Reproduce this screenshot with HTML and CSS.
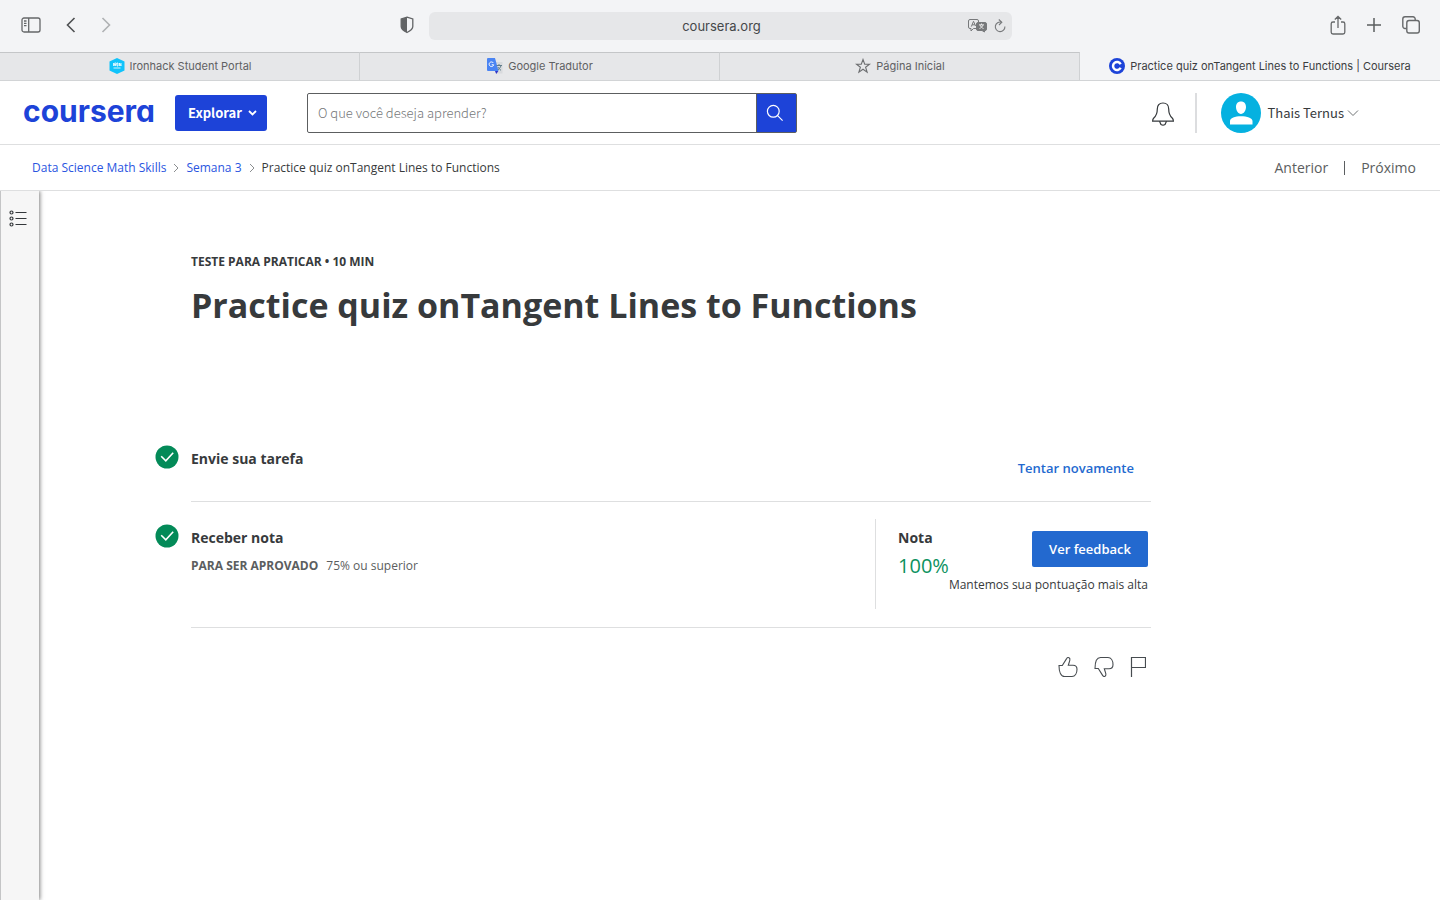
FILE: index.html
```html
<!DOCTYPE html>
<html lang="pt-BR">
<head>
<meta charset="utf-8">
<title>Practice quiz onTangent Lines to Functions | Coursera</title>
<link rel="stylesheet" href="styles.css">
</head>
<body>
<div class="browser">
  <div class="toolbar">
    <div class="toolbar-side">
      <button class="icon-btn" aria-label="Barra lateral"><svg width="20" height="16" viewBox="0 0 20 16" fill="none" stroke="#656769" stroke-width="1.3"><rect x="1" y="1" width="18" height="14" rx="2"/><path d="M7.7 1v14M3 4h2.5M3 6.3h2.5M3 8.6h2.5"/></svg></button>
      <button class="icon-btn nav-back" aria-label="Voltar"><svg width="10" height="16" viewBox="0 0 10 16" fill="none" stroke="#4f5153" stroke-width="1.6"><path d="M8.5 1 1.5 8l7 7"/></svg></button>
      <button class="icon-btn nav-next" aria-label="Avançar"><svg width="10" height="16" viewBox="0 0 10 16" fill="none" stroke="#afb1b3" stroke-width="1.6"><path d="m1.5 1 7 7-7 7"/></svg></button>
      <button class="icon-btn shield" aria-label="Privacidade"><svg width="14" height="18" viewBox="0 0 14 18"><path d="M7 1.2 12.8 3v7.5c0 2.600-3.200 4.700-5.800 6-2.600-1.300-5.800-3.400-5.800-6V3z" fill="none" stroke="#626466" stroke-width="1.300"/><path d="M7 1.200v15.300c-2.600-1.300-5.800-3.400-5.800-6V3z" fill="#626466"/></svg></button>
    </div>
    <div class="address">
      <span class="address-text">coursera.org</span>
      <button class="icon-btn" aria-label="Traduzir"><svg width="19" height="14" viewBox="0 0 19 14" fill="none" stroke="#77797b"><path d="M8 9.500H5.500L3 12V9.500H2a1.500 1.500 0 0 1-1.500-1.500V2A1.500 1.500 0 0 1 2 .500h7A1.500 1.500 0 0 1 10.500 2v1"/><path d="m3.300 7.600 2.200-5.300L7.600 7M4 5.800h3"/><path d="M10 3.500h7A1.500 1.500 0 0 1 18.500 5v5a1.500 1.500 0 0 1-1.500 1.500h-.500V13L14 11.500h-4A1.500 1.500 0 0 1 8.500 10V5A1.500 1.500 0 0 1 10 3.500z" fill="#77797b"/><path d="M11 5.800h5M13.500 4.500v1.300M12 6c.5 1.500 2 3 3.500 3.500M15 6c-.5 1.500-2 3-3.500 3.500" stroke="#fff" stroke-width=".8"/></svg></button>
      <button class="icon-btn" aria-label="Recarregar"><svg width="12" height="14" viewBox="0 0 12 14" fill="none" stroke="#77797b" stroke-width="1.100"><path d="M7.500 3.200A4.800 4.800 0 1 0 10.900 7.500M4.800.5l3 2.700L5 6"/></svg></button>
    </div>
    <div class="toolbar-side toolbar-end">
      <button class="icon-btn" aria-label="Compartilhar"><svg width="16" height="20" viewBox="0 0 16 20" fill="none" stroke="#67696b" stroke-width="1.300"><path d="M5 7H3a1.800 1.800 0 0 0-1.800 1.800v8.400A1.800 1.800 0 0 0 3 19h10a1.800 1.800 0 0 0 1.800-1.800V8.800A1.800 1.800 0 0 0 13 7h-2M8 13V1.500M4.800 4.500 8 1.500l3.200 3"/></svg></button>
      <button class="icon-btn" aria-label="Nova aba"><svg width="14" height="14" viewBox="0 0 14 14" stroke="#5b5d5f" stroke-width="1.500"><path d="M7 0v14M0 7h14"/></svg></button>
      <button class="icon-btn" aria-label="Visão geral das abas"><svg width="18" height="18" viewBox="0 0 18 18" fill="none" stroke="#67696b" stroke-width="1.400"><rect x="4.800" y="4.500" width="12.500" height="12.500" rx="2.200"/><path d="M4.500 12.500H3A2.200 2.200 0 0 1 .8 10.300V3A2.200 2.200 0 0 1 3 .8h8A2.200 2.200 0 0 1 13.200 3v1.300"/></svg></button>
    </div>
  </div>
  <nav class="tabs" aria-label="Abas">
    <a class="tab" href="#"><svg width="16" height="16" viewBox="0 0 16 16"><path d="m8 0 7.500 3.500v9L8 16 .5 12.500v-9z" fill="#0fc3fb"/><path d="M4.500 5v3m1.200 0V5h1.500v1.500H5.700L7 8m1-3h1v3H8zm2.500 3V5l1.500 3V5M4.500 10h7" fill="none" stroke="#fff" stroke-width=".8"/></svg>Ironhack Student Portal</a>
    <a class="tab" href="#"><svg width="16" height="16" viewBox="0 0 16 16"><path d="M8 4h7.500v11.500H9z" fill="#d8dadd"/><path d="M1 0h7l3.500 13H1a1 1 0 0 1-1-1V1a1 1 0 0 1 1-1z" fill="#4a84f3"/><path d="M8 13h3.400L9.200 16z" fill="#3034c7"/><path d="M6.400 5A2.300 2.300 0 1 0 6.700 6.800H4.700" fill="none" stroke="#fff"/><path d="M9.500 7.500H15M12 6v1.500M14 7.500c-.5 2-2 3.500-3 4.500M11 9c.5 1.200 2 2.500 3 3.500" fill="none" stroke="#607d8b"/></svg>Google Tradutor</a>
    <a class="tab" href="#"><svg width="16" height="16" viewBox="0 0 16 16" fill="none" stroke="#6c6e70" stroke-width="1.100"><path d="m8 1.500 1.700 4.700h4.800l-3.900 3 1.500 4.900L8 11.200l-4.100 2.900 1.500-4.900-3.900-3h4.800z"/></svg>Página Inicial</a>
    <a class="tab tab-active" href="#"><svg width="16" height="16" viewBox="0 0 16 16"><circle cx="8" cy="8" r="8" fill="#1d43d8"/><path d="M11.600 6.200a4 4 0 1 0 0 3.600" fill="none" stroke="#fff" stroke-width="2.500"/></svg>Practice quiz onTangent Lines to Functions | Coursera</a>
  </nav>
</div>

<header class="header">
  <a class="logo" href="#">coursera</a>
  <button class="explore">Explorar <svg width="9" height="6" viewBox="0 0 9 6" fill="none" stroke="#fff" stroke-width="1.800"><path d="m1 1 3.500 3.500L8 1"/></svg></button>
  <form class="search">
    <input type="text" aria-label="Pesquisar" placeholder="O que você deseja aprender?">
    <button type="button" aria-label="Buscar"><svg width="18" height="18" viewBox="0 0 18 18" fill="none" stroke="#fff" stroke-width="1.200"><circle cx="7.300" cy="7.300" r="5.900"/><path d="m11.600 11.600 5 5"/></svg></button>
  </form>
  <div class="account">
    <button class="icon-btn" aria-label="Notificações"><svg width="24" height="26" viewBox="0 0 24 26" fill="none" stroke="#35393c" stroke-width="1.200"><path d="M12 3c-3.700 0-5.700 2.500-5.700 6 0 5-1 6.700-3.500 9-.8.800-1.200 1.500-1.200 3.200h20.800c0-1.700-.4-2.400-1.200-3.200-2.500-2.300-3.500-4-3.500-9 0-3.500-2-6-5.700-6z"/><path d="M8.500 21.200 10 24.500c1.200.8 2.800.8 4 0l1.500-3.300"/></svg></button>
    <button class="profile"><svg width="40" height="40" viewBox="0 0 40 40"><circle cx="20" cy="20" r="20" fill="#05b1e0"/><path d="M20 8.500c3.200 0 5 2.200 5 5.500s-2.200 7-5 7-5-3.700-5-7 1.800-5.500 5-5.500zM9 31.500V28c0-2.800 5-4.700 11-4.700S31.500 25.200 31.500 28v3.500z" fill="#fff"/></svg><span class="user">Thais Ternus</span><svg width="12" height="8" viewBox="0 0 12 8" fill="none" stroke="#6f7375"><path d="m1 1.500 5 5 5-5"/></svg></button>
  </div>
</header>

<div class="subnav">
  <nav class="crumbs" aria-label="Trilha">
    <a href="#">Data Science Math Skills</a>
    <svg width="6" height="10" viewBox="0 0 6 10" fill="none" stroke="#8b8e90"><path d="m1 1 4 4-4 4"/></svg>
    <a href="#">Semana 3</a>
    <svg width="6" height="10" viewBox="0 0 6 10" fill="none" stroke="#8b8e90"><path d="m1 1 4 4-4 4"/></svg>
    <span>Practice quiz onTangent Lines to Functions</span>
  </nav>
  <nav class="pager" aria-label="Itens"><a href="#">Anterior</a><a href="#">Próximo</a></nav>
</div>

<div class="page">
  <aside class="rail">
    <button class="icon-btn" aria-label="Itens do curso"><svg width="18" height="18" viewBox="0 0 18 18" fill="none" stroke="#33373a" stroke-width="1.200"><circle cx="2.500" cy="2.500" r="1.500"/><circle cx="2.500" cy="8.500" r="1.500"/><circle cx="2.500" cy="14.500" r="1.500"/><path d="M6.500 2.500H17.500M6.500 8.500H17.500M6.500 14.500H17.500"/></svg></button>
  </aside>
  <main class="content">
    <p class="eyebrow">TESTE PARA PRATICAR • 10 MIN</p>
    <h1>Practice quiz onTangent Lines to Functions</h1>

    <section class="step">
      <svg class="check" width="24" height="24" viewBox="0 0 24 24"><circle cx="12" cy="12" r="11.500" fill="#038a58"/><path d="m6.200 11.300 4.600 4.500L18.200 7.800" fill="none" stroke="#fff" stroke-width="1.600"/></svg>
      <div class="step-body submit">
        <h2>Envie sua tarefa</h2>
        <button class="retry">Tentar novamente</button>
      </div>
    </section>

    <section class="step">
      <svg class="check check-grade" width="24" height="24" viewBox="0 0 24 24"><circle cx="12" cy="12" r="11.500" fill="#038a58"/><path d="m6.200 11.300 4.600 4.500L18.200 7.800" fill="none" stroke="#fff" stroke-width="1.600"/></svg>
      <div class="step-body grade">
        <div class="requirement">
          <h2>Receber nota</h2>
          <p><strong>PARA SER APROVADO</strong><span>75% ou superior</span></p>
        </div>
        <div class="result">
          <div class="score"><h2>Nota</h2><p>100%</p></div>
          <div class="feedback"><button>Ver feedback</button><p>Mantemos sua pontuação mais alta</p></div>
        </div>
      </div>
    </section>

    <div class="reactions">
      <button class="icon-btn" aria-label="Gostei"><svg width="20" height="22" viewBox="0 0 20 22" fill="none" stroke="#474c50" stroke-width="1.100"><path d="M1 9.500h3.300L8.600 2.600C9.300 1.400 10.300 1.200 11.100 1.800c.9.600 1 1.500.7 2.500L10.300 9.300H15c2.500 0 4 1.700 4 4 0 4.200-2 7.200-5 7.200H6.500C3 20.500 1 16 1 9.500z"/></svg></button>
      <button class="icon-btn" aria-label="Não gostei"><svg width="20" height="22" viewBox="0 0 20 22" fill="none" stroke="#474c50" stroke-width="1.100"><path d="M1 12.500h3.300l4.300 6.900c.7 1.200 1.700 1.400 2.500.8.900-.6 1-1.500.7-2.500l-1.500-5H15c2.500 0 4-1.700 4-4 0-4.200-2-7.200-5-7.200H6.500C3 1.500 1 6 1 12.500z"/></svg></button>
      <button class="icon-btn" aria-label="Denunciar"><svg width="16" height="22" viewBox="0 0 16 22" fill="none" stroke="#474c50" stroke-width="1.200"><path d="M1.500 21V1.500h14v10h-14"/></svg></button>
    </div>
  </main>
</div>
</body>
</html>
```

FILE: styles.css
```css
* { box-sizing: border-box; }
body {
  margin: 0;
  min-height: 100vh;
  display: flex;
  flex-direction: column;
  background: #fff;
  color: #373a3c;
  font-family: "Open Sans", sans-serif;
}
h1, h2, p { margin: 0; }
button { font: inherit; color: inherit; border: 0; padding: 0; background: none; cursor: pointer; }
a { color: inherit; text-decoration: none; }
svg { display: block; flex: none; }
.icon-btn { display: flex; align-items: center; justify-content: center; }

.browser { background: #f3f4f6; font-family: Inter, sans-serif; }
.toolbar {
  display: grid;
  grid-template-columns: 1fr minmax(0, 583px) 1fr;
  align-items: center;
  height: 52px;
}
.toolbar-side { display: flex; align-items: center; padding: 0 20px 2px 21px; }
.nav-back { margin-left: 25px; }
.nav-next { margin-left: 25px; }
.shield { margin-left: auto; margin-right: -5px; }
.toolbar-end { justify-content: flex-end; gap: 21px; }
.address {
  display: flex;
  align-items: center;
  gap: 7px;
  height: 28px;
  padding: 0 6px 0 54px;
  border-radius: 6px;
  background: #e6e7e9;
  font-size: 13px;
  color: #454749;
}
.address-text { flex: 1; text-align: center; }
.tabs {
  display: grid;
  grid-template-columns: repeat(4, 1fr);
  height: 29px;
  border-bottom: 1px solid #d2d4d6;
}
.tab {
  display: flex;
  align-items: center;
  justify-content: center;
  gap: 5px;
  padding: 0 0 2px 1px;
  border-top: 1px solid #c4c6c8;
  border-right: 1px solid #cfd1d3;
  background: #e6e7e9;
  font-size: 11px;
  color: #5f6163;
  white-space: nowrap;
}
.tab-active { border-color: transparent; background: #f3f4f6; color: #3b3d3f; }

.header {
  display: flex;
  align-items: center;
  height: 64px;
  padding: 0 81px 0 23px;
  border-bottom: 1px solid #dedfe0;
  font-family: "Noto Sans CJK SC", sans-serif;
  font-size: 13px;
}
.logo {
  width: 152px;
  padding-bottom: 3px;
  color: #1d43d8;
  font: 700 30px/36px Inter, sans-serif;
  font-feature-settings: "cv11";
}
.explore {
  display: flex;
  align-items: center;
  justify-content: center;
  gap: 6px;
  width: 92px;
  height: 36px;
  padding-left: 3px;
  border-radius: 3px;
  background: #1d43d8;
  color: #fff;
  font-weight: 700;
}
.search { display: flex; width: 490px; height: 40px; margin-left: 40px; border: 1px solid #5c5e60; border-radius: 2px; }
.search input {
  flex: 1;
  min-width: 0;
  border: 0;
  padding: 0 10px;
  background: none;
  font: 300 13px "Noto Sans CJK SC", sans-serif;
}
.search input::placeholder { color: #757779; opacity: 1; }
.search button {
  display: flex;
  align-items: center;
  justify-content: center;
  width: 40px;
  padding-right: 3px;
  border-left: 1px solid #5c5e60;
  background: #1d43d8;
}
.account { display: flex; align-items: center; margin-left: auto; }
.profile {
  display: flex;
  align-items: center;
  height: 40px;
  margin-left: 20px;
  padding-left: 24px;
  border-left: 2px solid #dcdddf;
}
.user { margin: 0 3px 0 6px; }

.subnav {
  display: flex;
  align-items: center;
  justify-content: space-between;
  height: 46px;
  padding: 0 24px 0 32px;
  border-bottom: 1px solid #dedfe0;
}
.crumbs { display: flex; align-items: center; gap: 7px; font-size: 12px; }
.crumbs a { color: #2a55df; }
.pager { display: flex; font-size: 14px; line-height: 14px; color: #5b5e60; }
.pager a + a { margin-left: 16px; padding-left: 16px; border-left: 1px solid #5b5e60; }

.page { flex: 1; display: flex; }
.rail {
  width: 39px;
  padding: 19px 0 0 8px;
  border-left: 1px solid #c4c5c6;
  background: #f6f6f6;
  box-shadow: 1px 0 4px rgba(0, 0, 0, 0.5);
  clip-path: inset(0 -8px 0 0);
}
.content { flex: 1; max-width: 1112px; padding: 61px 0 24px 152px; }
.eyebrow { font-size: 12px; line-height: 20px; font-weight: 700; }
h1 { margin-top: 11px; font-size: 34px; line-height: 44px; }
h2 { font-size: 14px; line-height: 20px; }

.step { display: grid; grid-template-columns: 24px 1fr; gap: 12px; margin-left: -36px; }
.check { margin-top: 7px; }
.check-grade { margin-top: 22px; }
.step-body { border-bottom: 1px solid #dedfe0; }
h1 + .step { margin-top: 111px; }
.submit { display: flex; justify-content: space-between; align-items: flex-start; height: 64px; padding: 11px 17px 0 0; }
.retry { margin-top: 10px; color: #2369cf; font-size: 13px; line-height: 18px; font-weight: 600; }
.grade { display: flex; justify-content: space-between; padding: 17px 3px 18px 0; }
.requirement { padding-top: 9px; }
.requirement p { display: flex; gap: 8px; margin-top: 8px; font-size: 12px; line-height: 20px; color: #5b5e60; }
.result { display: flex; min-height: 90px; padding-left: 22px; border-left: 1px solid #dedfe0; }
.score { padding-top: 9px; }
.score p { margin-top: 4px; color: #0c9260; font-size: 20px; line-height: 28px; }
.feedback { display: flex; flex-direction: column; align-items: flex-end; padding-top: 12px; }
.feedback button {
  width: 116px;
  height: 36px;
  border-radius: 2px;
  background: #2369cf;
  color: #fff;
  font-size: 13px;
  font-weight: 600;
}
.feedback p { margin-top: 8px; font-size: 12px; line-height: 20px; }
.reactions { display: flex; justify-content: flex-end; gap: 16px; padding: 28px 5px 0 0; }
```
